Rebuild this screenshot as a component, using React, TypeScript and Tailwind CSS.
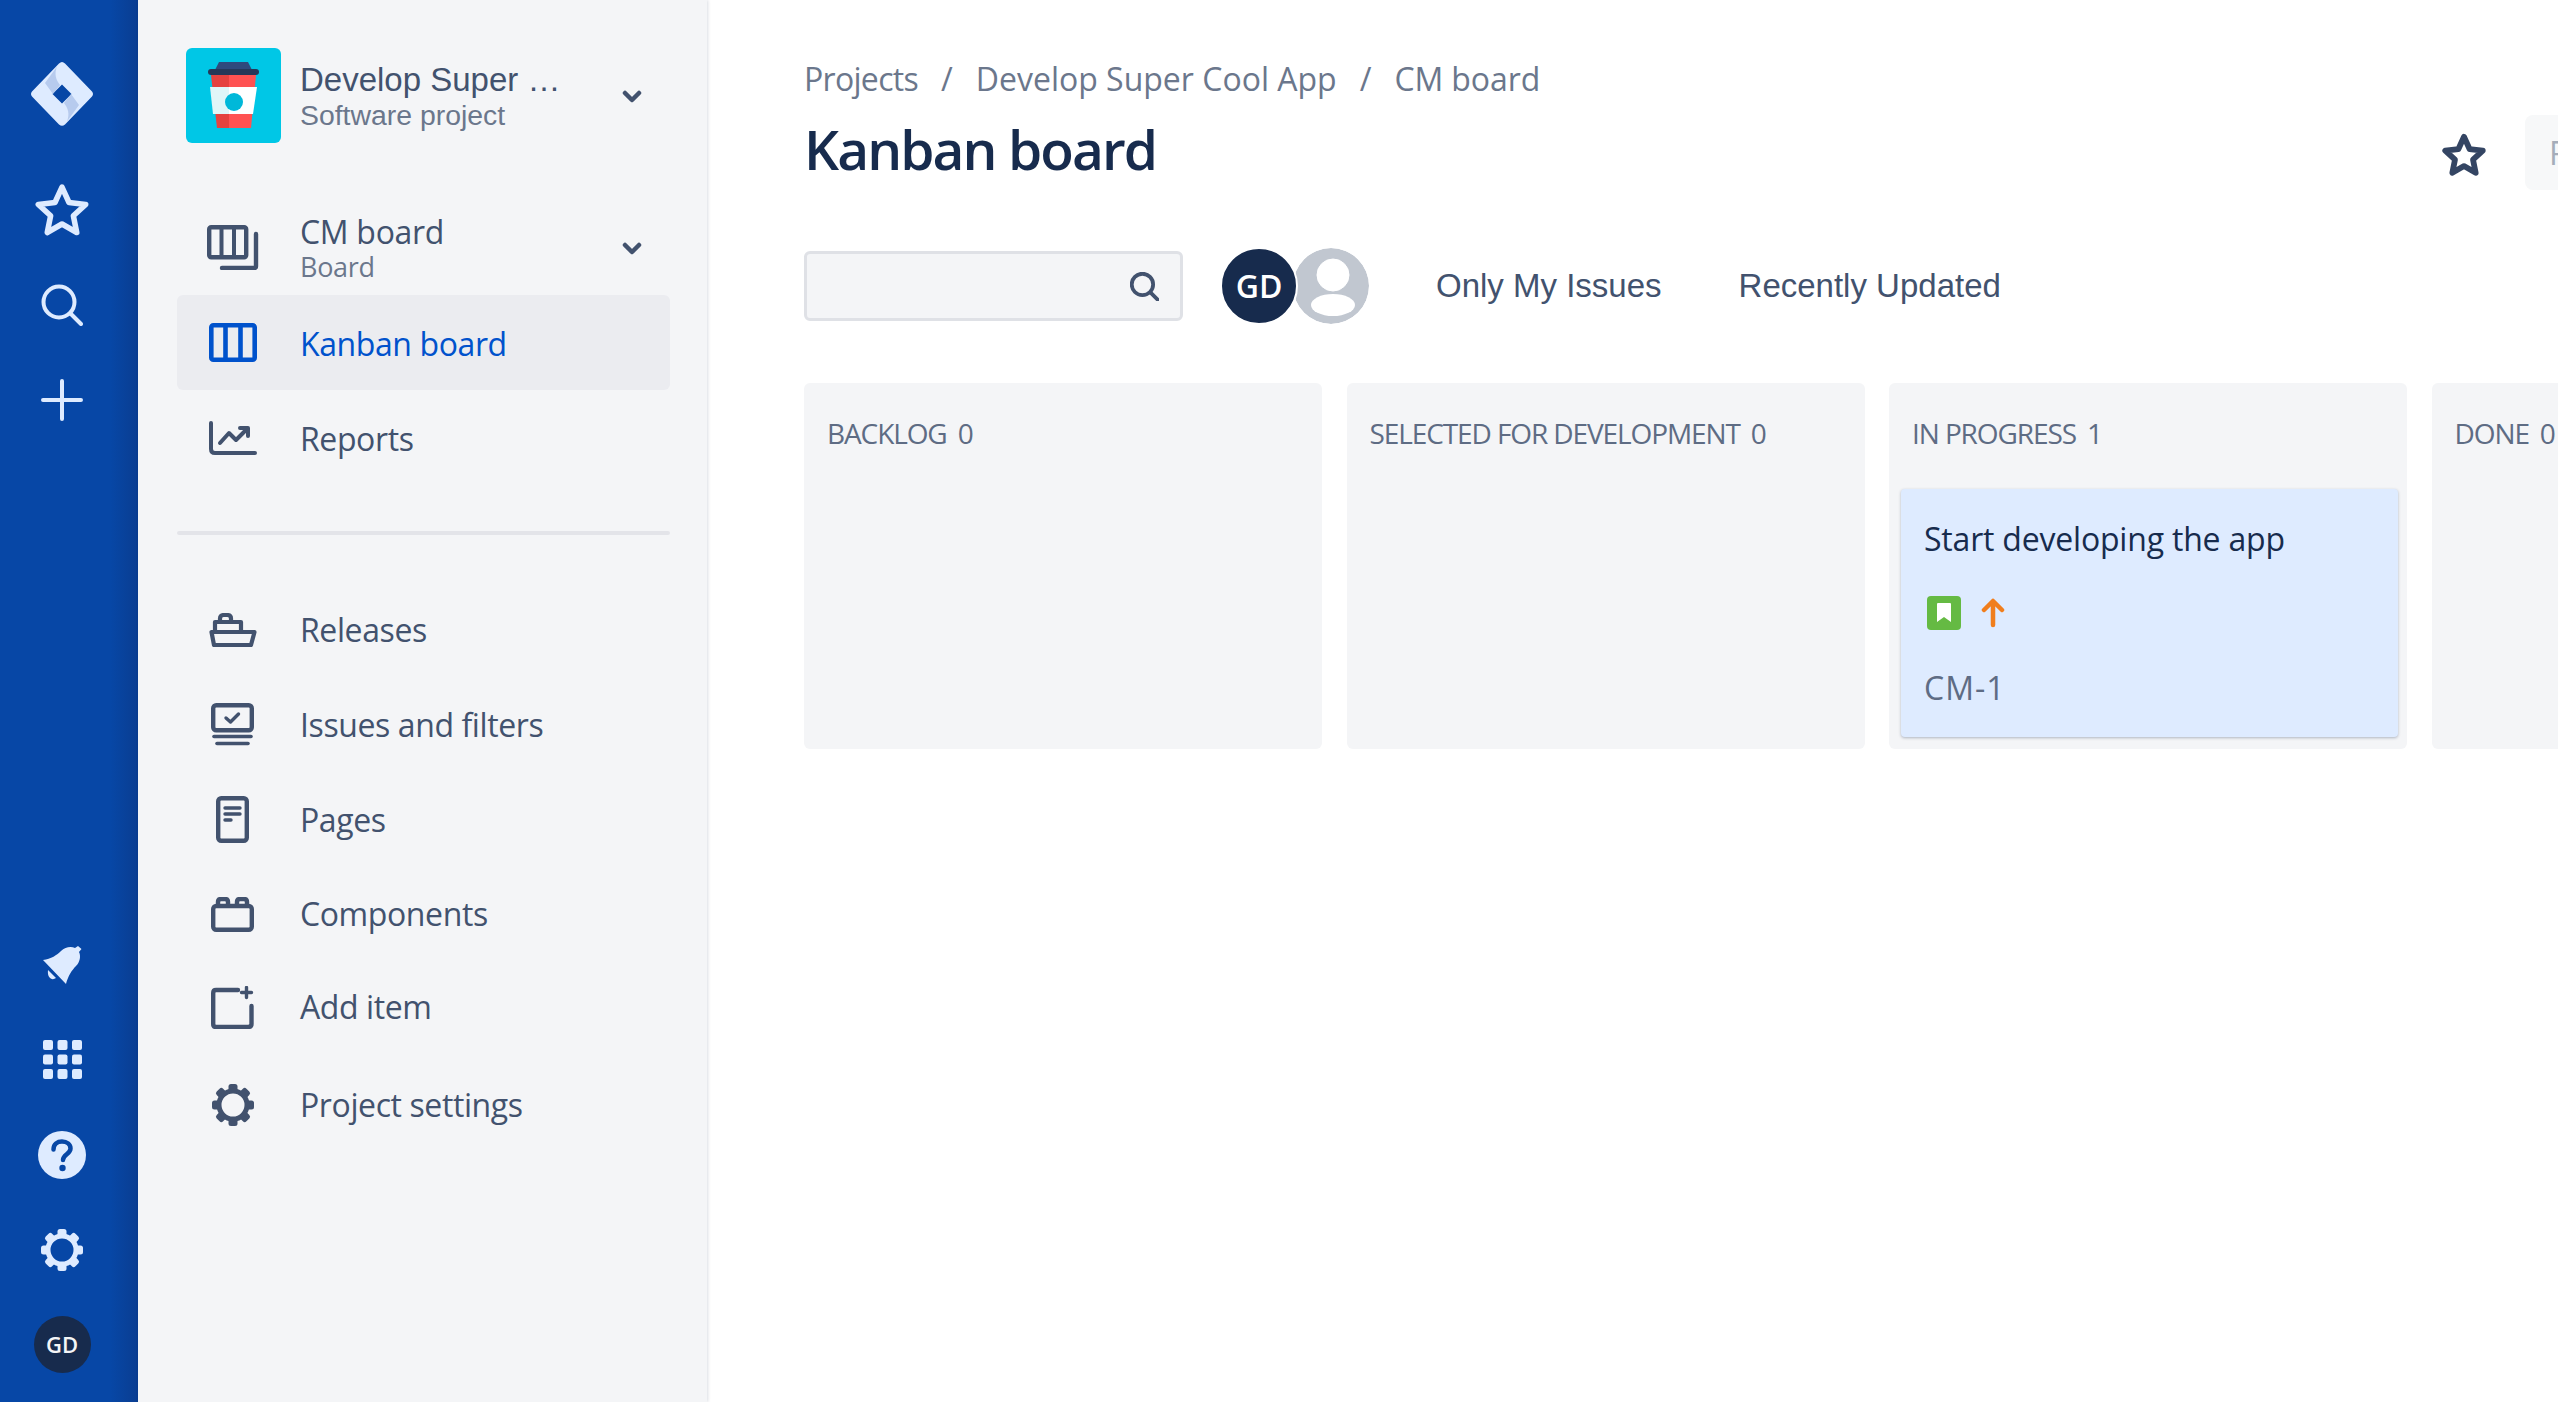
import React from "react";

const Logo = () => (
  <svg width="64" height="66" viewBox="0 0 64 66">
    <path fillRule="evenodd" fill="#deebff" d="M32 1 Q33.500 1 35 2.500 L62 30.500 Q64 33 62 35.500 L35 63.500 Q32 66 29 63.500 L2 35.500 Q0 33 2 30.500 L29 2.500 Q30.500 1 32 1 Z M32 23.500 L22.500 33 L32 42.500 L41.500 33 Z" />
    <path fill="#a9c0e8" opacity="0.75" d="M27 5.500 C24 13 26 19 30 24 L23 33 L15 22 Z" />
    <path fill="#a9c0e8" opacity="0.75" d="M37 60.500 C40 53 38 47 34 42 L41 33 L49 44 Z" />
  </svg>
);

const Cup = () => (
  <svg width="95" height="95" viewBox="0 0 95 95">
    <path fill="#e5423f" d="M25 27 H43 V80 H31 Z" />
    <path fill="#ff5252" d="M43 27 H70 L65 80 H43 Z" />
    <path fill="#e0f6f8" d="M24 39 H43 V66 H27 Z" />
    <path fill="#ffffff" d="M43 39 H71 L67 66 H43 Z" />
    <circle cx="48" cy="54" r="9" fill="#00b8d9" />
    <path fill="#2f4a7c" d="M33 14 H62 L66 22 H29 Z" />
    <rect x="22" y="21" width="51" height="6" rx="3" fill="#253858" />
  </svg>
);

const Star = ({ color, size, sw }: { color: string; size: number; sw: number }) => (
  <svg width={size} height={size} viewBox="0 0 24 24" fill="none" stroke={color} strokeWidth={sw} strokeLinejoin="round">
    <path d="M12 2.500 L14.900 8.900 L21.800 9.700 L16.700 14.400 L18.100 21.300 L12 17.800 L5.900 21.300 L7.300 14.400 L2.200 9.700 L9.100 8.900 Z" />
  </svg>
);

const Search = ({ color, size, sw }: { color: string; size: number; sw: number }) => (
  <svg width={size} height={size} viewBox="0 0 42 42" fill="none" stroke={color} strokeWidth={sw} strokeLinecap="round">
    <circle cx="18" cy="18" r="15.500" />
    <path d="M29.500 29.500 L40 40" />
  </svg>
);

const Plus = () => (
  <svg width="42" height="42" viewBox="0 0 42 42" fill="none" stroke="#deebff" strokeWidth="4" strokeLinecap="round">
    <path d="M21 2 V40 M2 21 H40" />
  </svg>
);

const Bell = () => (
  <svg width="39" height="38" viewBox="0 0 39 38" fill="#deebff">
    <path d="M0 14 C8 13 14 9 18 5 C22 1 28 0 32 2 L35 0 L38.500 3 L36 6 C38 10 37 16 33 20 C29 24 25 30 23 38 Z" />
    <path d="M5 24 L13 32 C9 35 4 32 5 24 Z" />
  </svg>
);

const Apps = () => (
  <svg width="39" height="39" viewBox="0 0 39 39" fill="#deebff">
    {[0, 14.500, 29].map((y) =>
      [0, 14.500, 29].map((x) => <rect key={`${x}-${y}`} x={x} y={y} width="10" height="10" rx="2" />)
    )}
  </svg>
);

const Help = () => (
  <svg width="48" height="48" viewBox="0 0 48 48">
    <circle cx="24" cy="24" r="24" fill="#deebff" />
    <path d="M15.500 18.500 C15.500 13 19.500 10.500 24 10.500 C29 10.500 32.500 13.500 32.500 17.500 C32.500 23 25 23.500 25 29" fill="none" stroke="#0747a6" strokeWidth="4.500" strokeLinecap="round" />
    <circle cx="24.500" cy="37" r="3.200" fill="#0747a6" />
  </svg>
);

const Gear = ({ color }: { color: string }) => (
  <svg width="42" height="42" viewBox="0 0 42 42">
    {[0, 45, 90, 135, 180, 225, 270, 315].map((a) => (
      <rect key={a} x="16.500" y="0" width="9" height="9" rx="2.500" fill={color} transform={`rotate(${a} 21 21)`} />
    ))}
    <circle cx="21" cy="21" r="14" fill="none" stroke={color} strokeWidth="5" />
  </svg>
);

const ic = "#42526e";

const CmBoard = () => (
  <svg width="52" height="45" viewBox="0 0 52 45" fill="none" stroke={ic} strokeWidth="4.400" strokeLinejoin="round" strokeLinecap="round">
    <rect x="2.200" y="2.200" width="37" height="30" rx="2" />
    <path d="M14.500 2 V32 M27 2 V32" strokeWidth="4" />
    <path d="M49 9 V41 Q49 43 47 43 H15" />
  </svg>
);

const KanbanIcon = () => (
  <svg width="48" height="39" viewBox="0 0 48 39" fill="none" stroke="#0052cc" strokeWidth="4.600">
    <rect x="2.300" y="2.300" width="43.400" height="34.400" rx="2" />
    <path d="M16.500 2 V37 M31.500 2 V37" />
  </svg>
);

const Reports = () => (
  <svg width="48" height="34" viewBox="0 0 48 34" fill="none" stroke={ic} strokeWidth="4" strokeLinecap="round" strokeLinejoin="round">
    <path d="M2 2 V28 Q2 32 6 32 H46" />
    <path d="M11 22 L20 12 L27 19 L38 8" />
    <path d="M31 7 H39 V15" />
  </svg>
);

const Ship = () => (
  <svg width="48" height="34" viewBox="0 0 48 34" fill="none" stroke={ic} strokeWidth="4.200" strokeLinejoin="round">
    <path d="M2.500 19 H45.500 L42 32 H5 Z" />
    <path d="M6 19 V9 H32 V19" />
    <path d="M11 9 V5.500 Q11 2 15 2 H18 Q22 2 22 5.500 V9" />
  </svg>
);

const Issues = () => (
  <svg width="43" height="43" viewBox="0 0 43 43" fill="none" stroke={ic} strokeLinecap="round">
    <rect x="2.200" y="2.200" width="38.600" height="25" rx="3" strokeWidth="4.400" />
    <path d="M15 15 L19.500 19 L27.500 11" strokeWidth="3.400" strokeLinejoin="round" />
    <path d="M3 33.500 H40" strokeWidth="3.600" />
    <path d="M6 40.500 H37" strokeWidth="3.600" />
  </svg>
);

const PageIcon = () => (
  <svg width="33" height="47" viewBox="0 0 33 47" fill="none" stroke={ic} strokeLinecap="round">
    <rect x="2.200" y="2.200" width="28.600" height="42.600" rx="3" strokeWidth="4.400" />
    <path d="M9 12 H24 M9 18 H24 M9 24 H15" strokeWidth="3.400" />
  </svg>
);

const Comp = () => (
  <svg width="43" height="35" viewBox="0 0 43 35" fill="none" stroke={ic} strokeWidth="4.400" strokeLinejoin="round">
    <rect x="2.200" y="9" width="38.600" height="23.800" rx="3" />
    <path d="M7 9 V5 Q7 2 10 2 H14 Q17 2 17 5 V9" />
    <path d="M26 9 V5 Q26 2 29 2 H33 Q36 2 36 5 V9" />
  </svg>
);

const AddItem = () => (
  <svg width="43" height="43" viewBox="0 0 43 43" fill="none" stroke={ic} strokeWidth="4.400" strokeLinecap="round" strokeLinejoin="round">
    <path d="M27 4 H5 Q2.200 4 2.200 7 V38 Q2.200 41 5 41 H37 Q40.500 41 40.500 38 V20" />
    <path d="M35.500 1.500 V11.500 M30.500 6.500 H40.500" strokeWidth="3.400" />
  </svg>
);

const Chevron = () => (
  <svg width="20" height="14" viewBox="0 0 20 14" fill="none" stroke={ic} strokeWidth="4.500" strokeLinecap="round" strokeLinejoin="round">
    <path d="M3 3 L10 10 L17 3" />
  </svg>
);

const rowBase = "flex items-center pl-[9px]";
const iconBox = "flex w-[95px] shrink-0 items-center justify-center pr-[2px]";
const label = "ml-[19px] text-[32px] leading-[40px] text-[#42526e] tracking-[-0.4px]";
const arial = "font-['Liberation_Sans',sans-serif]";

const lowerItems: { name: string; icon: React.ReactNode; h: string }[] = [
  { name: "Releases", icon: <Ship />, h: "h-[95px]" },
  { name: "Issues and filters", icon: <Issues />, h: "h-[95px]" },
  { name: "Pages", icon: <PageIcon />, h: "h-[95px]" },
  { name: "Components", icon: <Comp />, h: "h-[94px]" },
  { name: "Add item", icon: <AddItem />, h: "h-[92px]" },
  { name: "Project settings", icon: <Gear color={ic} />, h: "h-[104px]" },
];

const Column = ({ name, count, children }: { name: string; count: number; children?: React.ReactNode }) => (
  <div className="h-[366px] w-[518px] shrink-0 rounded-[6px] bg-[#f4f5f7]">
    <div className="flex h-[100px] items-center pl-[23px] text-[28px] tracking-[-1.1px] text-[#5e6c84]">
      <span>{name}</span>
      <span className="ml-[11px]">{count}</span>
    </div>
    {children}
  </div>
);

export default function App() {
  return (
    <div className="flex h-[1402px] w-[2558px] overflow-hidden bg-white font-['Open_Sans',sans-serif]">
      <nav className="flex h-full w-[138px] shrink-0 flex-col justify-between bg-[linear-gradient(90deg,#0747a6_0%,#0747a6_80%,#0a3d91_100%)] pr-[14px]">
        <div className="flex flex-col items-center">
          <div className="mt-[61px] flex h-[66px] items-center justify-center"><Logo /></div>
          <div className="mt-[35px] flex h-[95px] items-center justify-center"><Star color="#deebff" size={58} sw={2.300} /></div>
          <div className="flex h-[95px] items-center justify-center"><Search color="#deebff" size={42} sw={4} /></div>
          <div className="flex h-[95px] items-center justify-center"><Plus /></div>
        </div>
        <div className="flex flex-col items-center pb-[10px]">
          <div className="flex h-[95px] items-center justify-center"><Bell /></div>
          <div className="flex h-[95px] items-center justify-center"><Apps /></div>
          <div className="flex h-[95px] items-center justify-center"><Help /></div>
          <div className="flex h-[95px] items-center justify-center"><Gear color="#deebff" /></div>
          <div className="flex h-[95px] items-center justify-center">
            <div className="flex h-[57px] w-[57px] items-center justify-center rounded-full bg-[#172b4d] text-[22px] font-semibold text-[#f4f5f7]">GD</div>
          </div>
        </div>
      </nav>

      <aside className="relative z-10 h-full w-[569px] shrink-0 bg-[#f4f5f7] pl-[39px] pr-[37px] pt-[48px] shadow-[1px_0_3px_rgba(9,30,66,0.15)]">
        <div className={`${rowBase} h-[95px]`}>
          <div className="h-[95px] w-[95px] shrink-0 overflow-hidden rounded-[6px] bg-[#00c7e6]"><Cup /></div>
          <div className={`ml-[19px] flex-1 ${arial}`}>
            <div className="whitespace-nowrap text-[33px] leading-[38px] text-[#42526e]">Develop Super  …</div>
            <div className="text-[28.400px] leading-[32px] text-[#6b778c]">Software project</div>
          </div>
          <div className="mr-[28px] mt-[2px]"><Chevron /></div>
        </div>

        <div className={`${rowBase} mt-[57px] h-[95px]`}>
          <div className={iconBox}><CmBoard /></div>
          <div className="ml-[19px] flex-1">
            <div className="text-[32px] leading-[38px] tracking-[-0.3px] text-[#42526e]">CM board</div>
            <div className="text-[27px] leading-[32px] tracking-[-0.3px] text-[#6b778c]">Board</div>
          </div>
          <div className="mr-[28px] mt-[2px]"><Chevron /></div>
        </div>

        <div className={`${rowBase} h-[95px] rounded-[6px] bg-[#ebecf0]`}>
          <div className={iconBox}><KanbanIcon /></div>
          <span className={`${label} pt-[3px] !text-[#0052cc]`}>Kanban board</span>
        </div>
        <div className={`${rowBase} h-[95px]`}>
          <div className={iconBox}><Reports /></div>
          <span className={`${label} pt-[3px]`}>Reports</span>
        </div>

        <div className="mt-[46px] h-[4px] rounded-full bg-[#e3e4e9]" />

        <div className="mt-[47px]">
          {lowerItems.map((it) => (
            <div key={it.name} className={`${rowBase} ${it.h}`}>
              <div className={iconBox}>{it.icon}</div>
              <span className={label}>{it.name}</span>
            </div>
          ))}
        </div>
      </aside>

      <main className="min-w-0 flex-1 overflow-hidden pl-[97px] pt-[60px]">
        <div className="flex h-[38px] items-center text-[32px] text-[#6b778c]">
          <span className="tracking-[-0.7px]">Projects</span>
          <span className="mx-[23px]">/</span>
          <span>Develop Super Cool App</span>
          <span className="mx-[23px]">/</span>
          <span className="tracking-[-0.1px]">CM board</span>
        </div>

        <div className="mt-[17px] flex h-[75px] items-center">
          <h1 className="flex-1 pb-[6px] text-[55px] font-semibold tracking-[-1.900px] text-[#172b4d]">Kanban board</h1>
          <div className="mr-[38px] mt-[4px]"><Star color="#344563" size={46} sw={3} /></div>
          <div className="h-[75px] w-[33px] shrink-0 overflow-hidden whitespace-nowrap rounded-l-[8px] bg-[#f7f8f9] pl-[24px] text-[32px] leading-[75px] text-[#a5adba]">Release</div>
        </div>

        <div className="mt-[61px] flex h-[70px] items-center">
          <div className="flex h-[70px] w-[379px] items-center justify-end rounded-[6px] border-[3px] border-[#dfe1e6] bg-[#f4f5f7] pr-[21px]">
            <Search color="#42526e" size={29} sw={5.500} />
          </div>
          <div className="ml-[37px] flex items-center">
            <div className="relative z-10 flex h-[78px] w-[78px] items-center justify-center rounded-full border-[2px] border-white bg-[#172b4d] text-[32px] font-semibold text-white">GD</div>
            <div className="-ml-[5px] h-[76px] w-[76px] overflow-hidden rounded-full">
              <svg width="76" height="76" viewBox="0 0 76 76">
                <circle cx="38" cy="38" r="38" fill="#c1c7d0" />
                <circle cx="40" cy="27" r="16" fill="#fff" stroke="#fff" />
                <ellipse cx="40" cy="57" rx="22" ry="11" fill="#fff" />
              </svg>
            </div>
          </div>
          <span className={`ml-[67px] text-[33px] text-[#42526e] ${arial}`}>Only My Issues</span>
          <span className={`ml-[77px] text-[33px] text-[#42526e] ${arial}`}>Recently Updated</span>
        </div>

        <div className="mt-[62px] flex gap-[24.500px]">
          <Column name="BACKLOG" count={0} />
          <Column name="SELECTED FOR DEVELOPMENT" count={0} />
          <Column name="IN PROGRESS" count={1}>
            <div className="ml-[12px] mt-[6px] h-[248px] w-[497px] rounded-[4px] bg-[#deebff] pl-[23px] shadow-[0_1px_3px_rgba(9,30,66,0.3)]">
              <div className="pt-[28px] text-[32px] leading-[44px] tracking-[-0.2px] text-[#172b4d]">Start developing the app</div>
              <div className="mt-[35px] flex h-[34px] items-center">
                <div className="ml-[3px] flex h-[34px] w-[34px] items-center justify-center rounded-[4px] bg-[#65ba43]">
                  <svg width="14" height="20" viewBox="0 0 14 20" fill="#fff"><path d="M0 1 Q0 0 1 0 H13 Q14 0 14 1 V19 L7 14 L0 19 Z" /></svg>
                </div>
                <div className="ml-[20px]">
                  <svg width="24" height="30" viewBox="0 0 24 30" fill="none" stroke="#f07e1d" strokeWidth="4.500" strokeLinecap="round" strokeLinejoin="round">
                    <path d="M12 4 V27 M3 12 L12 3 L21 12" />
                  </svg>
                </div>
              </div>
              <div className="mt-[38px] text-[32px] leading-[40px] tracking-[1px] text-[#5e6c84]">CM-1</div>
            </div>
          </Column>
          <Column name="DONE" count={0} />
        </div>
      </main>
    </div>
  );
}
